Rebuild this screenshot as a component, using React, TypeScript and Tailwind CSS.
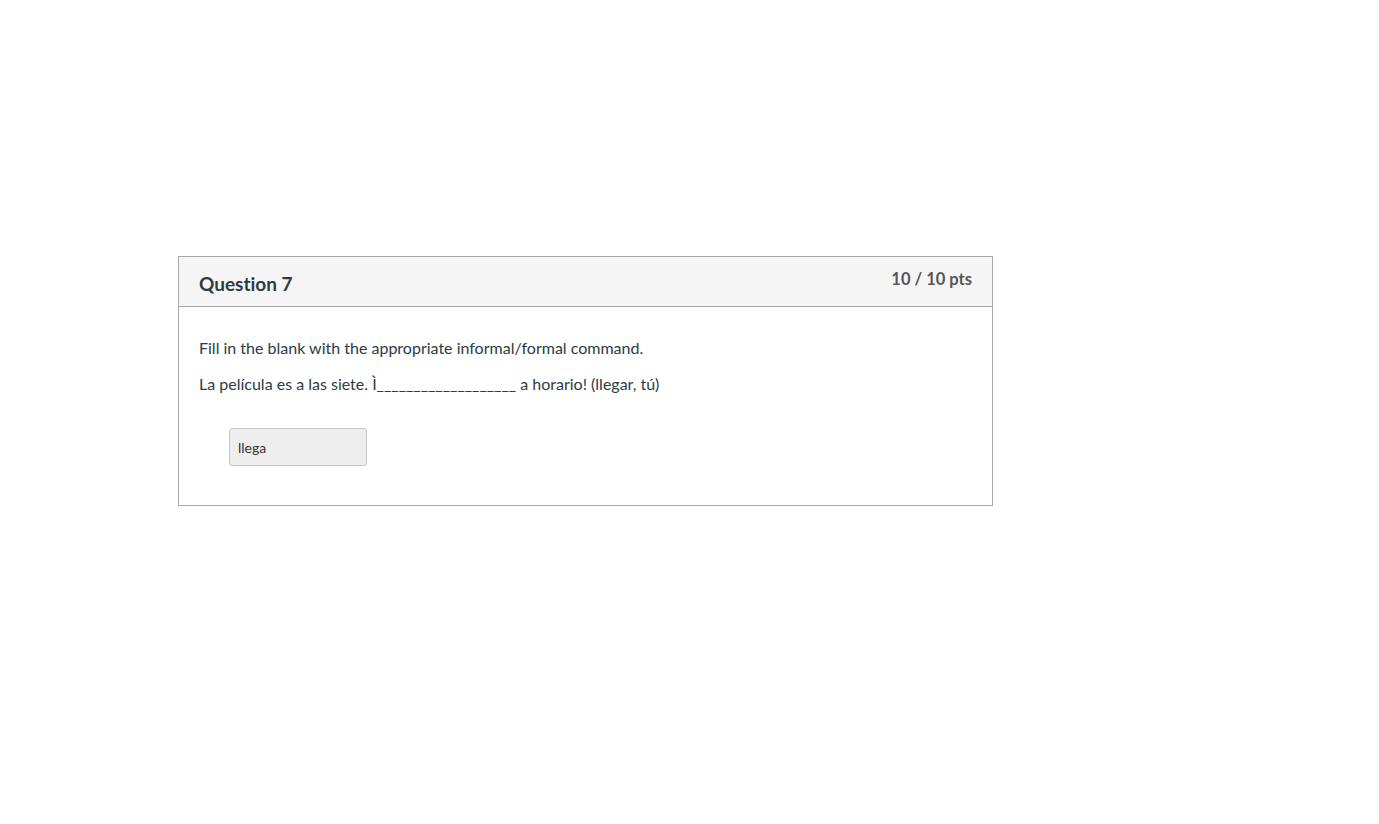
import React from 'react';

function App() {
  return (
    <div className="w-full h-[824px] bg-white pt-[256px] pl-[178px] [font-variant-ligatures:none]" style={{ fontFamily: 'Lato, "Open Sans", sans-serif' }}>
      <div className="w-[815px] border border-[#a9a9a9]">
        <div className="flex justify-between h-[50px] bg-[#f5f5f5] border-b border-[#a9a9a9] px-5">
          <h2 className="text-[19px] font-bold text-[#2d3b45] pt-[15px] leading-[24px]">Question 7</h2>
          <div className="text-[16.5px] font-bold text-[#555] pt-[10px] leading-[24px]">10 / 10 pts</div>
        </div>
        <div className="px-5 pt-[30px] pb-[39px] text-[16px] text-[#2d3b45]">
          <p className="leading-[22px]">Fill in the blank with the appropriate informal/formal command.</p>
          <p className="leading-[22px] mt-[14px]">La película es a las siete. Ì___________________ a horario! (llegar, tú)</p>
          <div className="mt-[33px] ml-[30px] w-[138px] h-[38px] bg-[#eeeeee] border border-[#c7c7c7] rounded-[3px] flex items-center px-2 text-[14px] text-[#333]">
            llega
          </div>
        </div>
      </div>
    </div>
  );
}

export default App;
